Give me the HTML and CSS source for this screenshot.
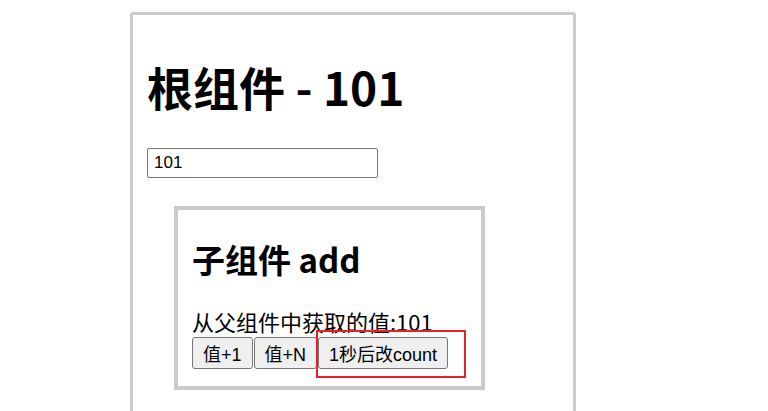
FILE: index.html
```html
<!DOCTYPE html>
<html>
<head>
<meta charset="utf-8">
<link rel="stylesheet" href="styles.css">
</head>
<body>
<div class="root">
  <h1 class="root-title">根组件 - 101</h1>
  <input class="root-input" type="text" value="101">
  <div class="child">
    <h2 class="child-title">子组件 add</h2>
    <div class="child-value">从父组件中获取的值:101</div>
    <div class="btns">
      <button class="btn">值+1</button><button class="btn">值+N</button><span class="mark"><button class="btn">1秒后改count</button></span>
    </div>
  </div>
</div>
</body>
</html>
```
FILE: styles.css
```css
html, body {
  margin: 0;
  padding: 0;
  background: #fff;
}
body {
  font-family: "Liberation Sans", "Noto Sans CJK SC", sans-serif;
  color: #000;
}
.root {
  margin: 12px 0 0 130px;
  width: 446px;
  height: 420px;
  border: 3px solid #cbcbcb;
  border-radius: 3px;
  padding: 0 0 0 14px;
  box-sizing: border-box;
}
.root-title {
  margin: 0;
  padding-top: 36px;
  font-family: "Noto Sans CJK SC", sans-serif;
  font-size: 46px;
  font-weight: bold;
  line-height: 70px;
}
.root-input {
  display: block;
  margin: 27px 0 0 0;
  width: 231px;
  height: 30px;
  box-sizing: border-box;
  border: 1px solid #767676;
  border-radius: 2px;
  padding: 0 6px;
  font-family: "Liberation Sans", sans-serif;
  font-size: 17px;
  color: #000;
}
.child {
  margin: 28px 0 0 27px;
  width: 311px;
  border: 4px solid #cbcbcb;
  box-sizing: border-box;
  padding: 0 0 17px 14px;
}
.child-title {
  margin: 0;
  padding-top: 25px;
  font-family: "Noto Sans CJK SC", sans-serif;
  font-size: 33px;
  font-weight: bold;
  line-height: 48px;
}
.child-value {
  margin-top: 24px;
  font-family: "Noto Sans CJK SC", sans-serif;
  font-size: 22px;
  line-height: 28px;
}
.btns {
  display: flex;
  align-items: center;
  margin-top: 2px;
}
.btn {
  height: 32px;
  padding: 0 10px;
  border: 1px solid #767676;
  border-radius: 3px;
  background: #efefef;
  font-family: "Liberation Sans", "Noto Sans CJK SC", sans-serif;
  font-size: 18px;
  color: #000;
  margin: 0 1px 0 0;
}
.mark {
  position: relative;
  display: inline-block;
}
.mark::after {
  content: "";
  position: absolute;
  left: -2px;
  top: -7px;
  width: 150px;
  height: 48px;
  border: 2px solid #e8202a;
  box-sizing: border-box;
  pointer-events: none;
}
```
